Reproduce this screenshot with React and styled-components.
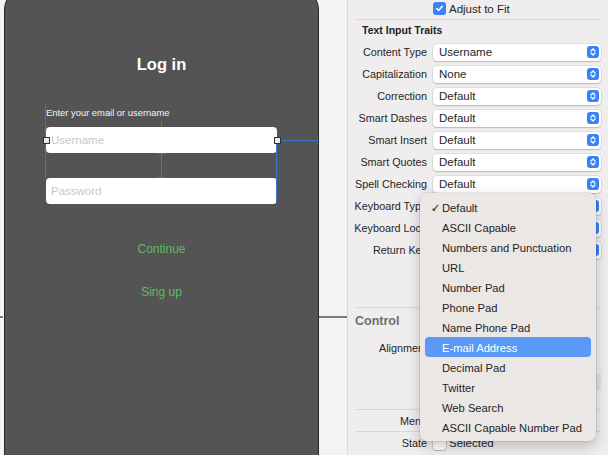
import React from 'react';
import styled, { createGlobalStyle } from 'styled-components';

const GlobalStyle = createGlobalStyle`
  *, *::before, *::after { box-sizing: border-box; }
  html, body { margin: 0; padding: 0; }
  body {
    font-family: "Liberation Sans", Arial, sans-serif;
    background: #f3f3f3;
  }
`;

const Screen = styled.div`
  display: flex;
  width: 608px;
  height: 455px;
  overflow: hidden;
`;

/* ---------- canvas ---------- */

const Canvas = styled.div`
  position: relative;
  width: 347px;
  flex-shrink: 0;
  background: #f3f3f3;
`;

const Phone = styled.div`
  margin: -14px 0 0 4px;
  width: 315px;
  height: 520px;
  background: #545454;
  border: 1px solid #262626;
  border-radius: 24px;
  display: flex;
  flex-direction: column;
  align-items: center;
`;

const Title = styled.div`
  margin-top: 66px;
  height: 22px;
  line-height: 22px;
  font-size: 16.5px;
  font-weight: bold;
  color: #ffffff;
`;

const Form = styled.div`
  position: relative;
  width: 231px;
  margin-top: 30px;
`;

const FieldLabel = styled.div`
  height: 16px;
  line-height: 16px;
  font-size: 9.4px;
  color: #f4f4f4;
`;

const Field = styled.div`
  height: 26px;
  margin-top: ${(p) => p.gap}px;
  line-height: 26px;
  padding-left: 5px;
  background: #ffffff;
  border-radius: 4px;
  font-size: 11.5px;
  color: #c6c6cb;
`;

const Guide = styled.div`
  position: absolute;
  background: #3c74c8;
`;

const Handle = styled.div`
  position: absolute;
  width: 7px;
  height: 7px;
  margin: -3px 0 0 -3px;
  background: #ececec;
  border: 1px solid #303030;
`;

const LinkButton = styled.div`
  margin-top: ${(p) => p.gap}px;
  height: 16px;
  line-height: 16px;
  font-size: 12px;
  color: #60bb60;
`;

const Connector = styled.div`
  position: absolute;
  top: 316px;
  height: 2px;
  background: #7a7a7a;
`;

/* ---------- inspector ---------- */

const Inspector = styled.div`
  position: relative;
  flex: 1;
  background: #efeded;
  border-left: 1px solid #dad8d8;
  color: #262626;
`;

const Row = styled.div`
  display: grid;
  grid-template-columns: 79px 168px;
  column-gap: 6px;
  align-items: center;
  height: ${(p) => p.h || 22}px;
  margin-top: ${(p) => p.mt || 0}px;
`;

const Label = styled.div`
  text-align: right;
  font-size: 10.8px;
  white-space: nowrap;
`;

const Separator = styled.div`
  height: 1px;
  margin: ${(p) => p.mt || 0}px 8px 0 8px;
  background: #d9d7d7;
`;

const SectionTitle = styled.div`
  height: ${(p) => p.h}px;
  line-height: ${(p) => p.h}px;
  padding-left: ${(p) => p.indent}px;
  font-size: ${(p) => p.size}px;
  font-weight: bold;
  color: ${(p) => p.color};
`;

const Popup = styled.div`
  display: flex;
  align-items: center;
  justify-content: space-between;
  height: 17px;
  padding: 0 2px 0 6px;
  background: #ffffff;
  border-radius: 4px;
  box-shadow: 0 0 0 0.5px rgba(0, 0, 0, 0.12), 0 1px 1.5px rgba(0, 0, 0, 0.18);
  font-size: 11.5px;
  color: #262626;
`;

const GhostControl = styled.div`
  height: 18px;
  border-radius: 4px;
  background: #e2e0e0;
`;

const CheckRow = styled.div`
  display: flex;
  align-items: center;
  gap: 3px;
  font-size: 11.5px;
`;

const Box = styled.div`
  width: 13px;
  height: 13px;
  border-radius: 3px;
  display: flex;
  align-items: center;
  justify-content: center;
  background: ${(p) => (p.checked ? '#3a82f7' : '#ffffff')};
  box-shadow: ${(p) =>
    p.checked ? 'none' : '0 0 0 0.5px rgba(0,0,0,0.25), 0 1px 1px rgba(0,0,0,0.12)'};
`;

const Menu = styled.div`
  position: absolute;
  left: 72px;
  top: 193px;
  width: 176px;
  padding: 4px 0;
  background: #ebe7e4;
  border-radius: 7px;
  box-shadow: 0 0 0 0.5px rgba(0, 0, 0, 0.14), 0 5px 14px rgba(0, 0, 0, 0.22);
`;

const MenuItem = styled.div`
  display: flex;
  align-items: center;
  height: 20px;
  margin: 0 5px;
  padding: 1px 0 0 4px;
  border-radius: 4px;
  font-size: 11.2px;
  white-space: nowrap;
  background: ${(p) => (p.active ? '#5a9af6' : 'transparent')};
  color: ${(p) => (p.active ? '#ffffff' : '#242424')};
`;

const CheckSlot = styled.span`
  width: 13px;
  text-align: center;
  font-family: "DejaVu Sans", sans-serif;
  font-size: 11.5px;
  font-weight: bold;
`;

function Stepper() {
  return (
    <svg width="12" height="12" viewBox="0 0 12 12">
      <rect width="12" height="12" rx="3" fill="#3a82f7" />
      <path d="M4 5 L6 3 L8 5 M4 7 L6 9 L8 7" stroke="#fff" strokeWidth="1.3" fill="none" strokeLinecap="round" strokeLinejoin="round" />
    </svg>
  );
}

function Tick() {
  return (
    <svg width="9" height="9" viewBox="0 0 9 9">
      <path d="M1.8 4.6 L3.7 6.5 L7.3 2.3" stroke="#fff" strokeWidth="1.6" fill="none" strokeLinecap="round" strokeLinejoin="round" />
    </svg>
  );
}

const traits = [
  ['Content Type', 'Username'],
  ['Capitalization', 'None'],
  ['Correction', 'Default'],
  ['Smart Dashes', 'Default'],
  ['Smart Insert', 'Default'],
  ['Smart Quotes', 'Default'],
  ['Spell Checking', 'Default'],
  ['Keyboard Type', 'Default'],
  ['Keyboard Look', 'Default'],
  ['Return Key', 'Default'],
];

const keyboardTypes = [
  'Default',
  'ASCII Capable',
  'Numbers and Punctuation',
  'URL',
  'Number Pad',
  'Phone Pad',
  'Name Phone Pad',
  'E-mail Address',
  'Decimal Pad',
  'Twitter',
  'Web Search',
  'ASCII Capable Number Pad',
];

export default function App() {
  return (
    <>
      <GlobalStyle />
      <Screen>
        <Canvas>
          <Phone>
            <Title>Log in</Title>
            <Form>
              <FieldLabel>Enter your email or username</FieldLabel>
              <Field gap={6}>Username</Field>
              <Field gap={25}>Password</Field>

              <Guide style={{ left: -1, top: 0, width: 1, height: 73 }} />
              <Guide style={{ left: 115, top: 16, width: 1, height: 6 }} />
              <Guide style={{ left: 115, top: 48, width: 1, height: 25 }} />
              <Guide style={{ left: 112, top: 48, width: 7, height: 1 }} />
              <Guide style={{ left: 112, top: 72, width: 7, height: 1 }} />
              <Guide style={{ left: 230, top: 35, width: 1, height: 63 }} />
              <Guide style={{ left: 231, top: 35, width: 41, height: 1 }} />
              <Guide style={{ left: 271, top: 32, width: 1, height: 7 }} />
              <Handle style={{ left: 0, top: 35 }} />
              <Handle style={{ left: 231, top: 35 }} />
            </Form>
            <LinkButton gap={37}>Continue</LinkButton>
            <LinkButton gap={27}>Sing up</LinkButton>
          </Phone>
          <Connector style={{ left: 319, width: 28 }} />
          <Connector style={{ left: 0, width: 3 }} />
        </Canvas>

        <Inspector>
          <Row h={17}>
            <span />
            <CheckRow>
              <Box checked>
                <Tick />
              </Box>
              Adjust to Fit
            </CheckRow>
          </Row>
          <Separator mt={2} />
          <SectionTitle h={21} indent={14} size={10.5} color="#1f1f1f">
            Text Input Traits
          </SectionTitle>
          {traits.map(([label, value]) => (
            <Row key={label}>
              <Label>{label}</Label>
              <Popup>
                {value}
                <Stepper />
              </Popup>
            </Row>
          ))}
          <Separator mt={46} />
          <SectionTitle h={26} indent={7} size={12.5} color="#6e6e6e">
            Control
          </SectionTitle>
          <Row mt={3}>
            <Label>Alignment</Label>
            <span />
          </Row>
          <Row mt={14} h={18}>
            <span />
            <GhostControl />
          </Row>
          <Separator mt={18} />
          <Row h={21}>
            <Label>Menu</Label>
            <span />
          </Row>
          <Separator />
          <Row>
            <Label>State</Label>
            <CheckRow>
              <Box />
              Selected
            </CheckRow>
          </Row>

          <Menu>
            {keyboardTypes.map((item) => (
              <MenuItem key={item} active={item === 'E-mail Address'}>
                <CheckSlot>{item === 'Default' ? '✓' : ''}</CheckSlot>
                {item}
              </MenuItem>
            ))}
          </Menu>
        </Inspector>
      </Screen>
    </>
  );
}
